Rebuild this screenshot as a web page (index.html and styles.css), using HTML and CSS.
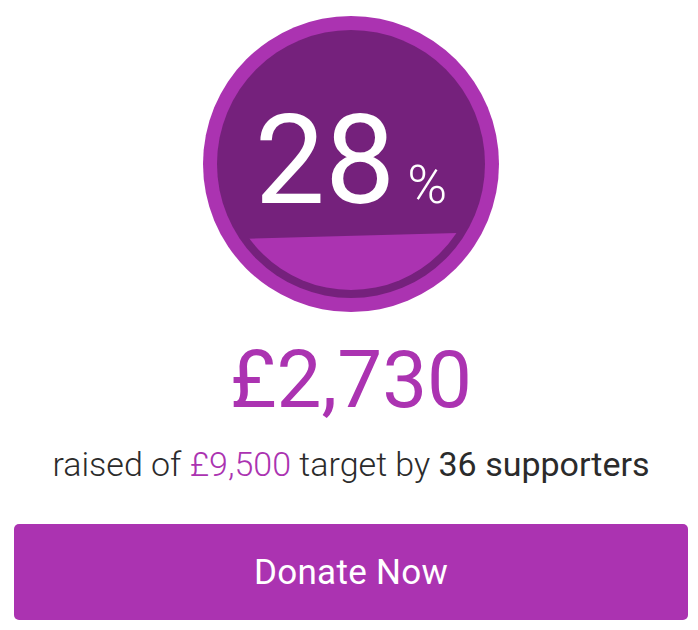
FILE: index.html
```html
<!DOCTYPE html>
<html lang="en">
<head>
<meta charset="utf-8">
<title>Donate</title>
<link rel="stylesheet" href="styles.css">
</head>
<body>
<div class="card">
  <div class="gauge">
    <svg class="gauge-svg" width="296" height="296" viewBox="0 0 296 296">
      <defs>
        <clipPath id="fillClip"><circle cx="148" cy="148" r="126"/></clipPath>
      </defs>
      <circle cx="148" cy="148" r="148" fill="#ab33b1"/>
      <circle cx="148" cy="148" r="134" fill="#75217c"/>
      <path d="M0 224 Q140 220 296 216 L296 296 L0 296 Z" fill="#ab33b1" clip-path="url(#fillClip)"/>
    </svg>
    <div class="gauge-label"><span class="pct-num">28</span><span class="pct-sign">%</span></div>
  </div>
  <div class="amount">£2,730</div>
  <div class="summary">raised of <span class="target">£9,500</span> target by <strong class="supporters">36 supporters</strong></div>
  <a class="donate" href="#">Donate Now</a>
</div>
</body>
</html>
```

FILE: styles.css
```css
html, body {
  margin: 0;
  padding: 0;
  background: #ffffff;
}
body {
  font-family: Roboto, "Liberation Sans", sans-serif;
}
.card {
  display: flex;
  flex-direction: column;
  align-items: center;
  padding: 16px 10px 0 14px;
}
.gauge {
  position: relative;
  width: 296px;
  height: 296px;
}
.gauge-svg {
  display: block;
}
.gauge-label {
  position: absolute;
  left: 0;
  right: 0;
  top: 82px;
  display: flex;
  justify-content: center;
  align-items: baseline;
  color: #ffffff;
  line-height: 1;
}
.pct-num {
  font-size: 125px;
  font-weight: 400;
}
.pct-sign {
  font-size: 54px;
  font-weight: 300;
  margin-left: 12px;
}
.amount {
  margin-top: 20px;
  font-size: 80px;
  line-height: 96px;
  color: #ab33b1;
  font-weight: 400;
}
.summary {
  margin-top: 16px;
  font-size: 34px;
  line-height: 40px;
  color: #2b2b2b;
  font-weight: 300;
}
.target {
  color: #ab33b1;
}
.supporters {
  font-weight: 400;
}
.donate {
  margin-top: 40px;
  align-self: stretch;
  height: 96px;
  display: flex;
  align-items: center;
  justify-content: center;
  background: #ab33b1;
  border-radius: 5px;
  color: #ffffff;
  font-size: 35px;
  letter-spacing: 0.3px;
  text-decoration: none;
}
```
